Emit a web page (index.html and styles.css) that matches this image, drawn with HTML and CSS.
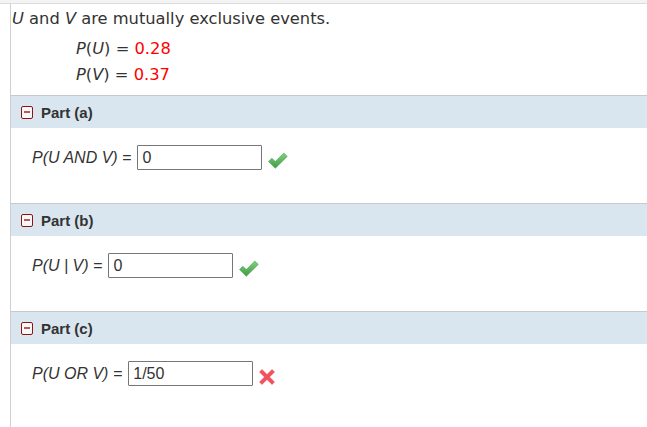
FILE: index.html
```html
<!DOCTYPE html>
<html>
<head>
<meta charset="utf-8">
<link rel="stylesheet" href="styles.css">
</head>
<body>
<div class="topbar"></div>
<div class="main">
  <div class="intro">
    <p class="lead"><i>U</i> and <i>V</i> are mutually exclusive events.</p>
    <div class="given">
      <div class="row"><i>P</i>(<i>U</i>) <span class="eq">=</span> <span class="val">0.28</span></div>
      <div class="row"><i>P</i>(<i>V</i>) <span class="eq">=</span> <span class="val">0.37</span></div>
    </div>
  </div>

  <div class="part">
    <div class="part-head"><span class="toggle"></span><span class="part-title">Part (a)</span></div>
    <div class="part-body">
      <span class="label">P(U AND V) =</span>
      <span class="answer">0</span>
      <svg class="mark" width="20" height="17" viewBox="0 0 20 17"><defs><linearGradient id="g1" x1="0" y1="0" x2="0" y2="1"><stop offset="0" stop-color="#82d27d"/><stop offset="1" stop-color="#3f9b45"/></linearGradient></defs><path d="M0.5 9.5 L3.8 6.2 L7.3 9.6 L15.8 1 L19.3 4.4 L7.3 16.2 Z" fill="url(#g1)" stroke="#4fa352" stroke-width="0.6" stroke-linejoin="round"/></svg>
    </div>
  </div>

  <div class="part">
    <div class="part-head"><span class="toggle"></span><span class="part-title">Part (b)</span></div>
    <div class="part-body">
      <span class="label">P(U | V) =</span>
      <span class="answer">0</span>
      <svg class="mark" width="20" height="17" viewBox="0 0 20 17"><defs><linearGradient id="g2" x1="0" y1="0" x2="0" y2="1"><stop offset="0" stop-color="#82d27d"/><stop offset="1" stop-color="#3f9b45"/></linearGradient></defs><path d="M0.5 9.5 L3.8 6.2 L7.3 9.6 L15.8 1 L19.3 4.4 L7.3 16.2 Z" fill="url(#g2)" stroke="#4fa352" stroke-width="0.6" stroke-linejoin="round"/></svg>
    </div>
  </div>

  <div class="part">
    <div class="part-head"><span class="toggle"></span><span class="part-title">Part (c)</span></div>
    <div class="part-body">
      <span class="label">P(U OR V) =</span>
      <span class="answer">1/50</span>
      <svg class="mark cross" width="16" height="16" viewBox="0 0 16 16"><path d="M3 0.5 L8 5.5 L13 0.5 L15.5 3 L10.5 8 L15.5 13 L13 15.5 L8 10.5 L3 15.5 L0.5 13 L5.5 8 L0.5 3 Z" fill="#f0525c" stroke="#e8444f" stroke-width="0.5" stroke-linejoin="round"/></svg>
    </div>
  </div>
</div>
</body>
</html>
```
FILE: styles.css
```css
html, body {
  margin: 0;
  padding: 0;
  background: #fff;
}
.topbar {
  height: 3px;
  background: #f3f3f3;
  border-bottom: 1px solid #dcdcdc;
}
.main {
  margin-left: 10px;
  border-left: 1px solid #cfcfcf;
  min-height: 423px;
}
.intro {
  padding: 5px 0 7px 1px;
  font-family: "DejaVu Sans", Verdana, sans-serif;
  color: #333;
}
.lead {
  margin: 0;
  font-size: 16.3px;
  line-height: 20px;
}
.given {
  margin: 7px 0 0 64px;
  font-size: 16.3px;
}
.given .row {
  line-height: 26px;
}
.val {
  color: #f00;
}
.part-head {
  height: 32px;
  border-top: 1px solid #c9c9c9;
  background: #d9e6f0;
  display: flex;
  align-items: center;
  padding-left: 10px;
  font-family: "Liberation Sans", Arial, sans-serif;
}
.toggle {
  width: 10px;
  height: 11px;
  border: 1px solid #8b1515;
  border-radius: 2px;
  background: #fbf7f7;
  position: relative;
  margin-right: 8px;
  margin-top: 1px;
}
.toggle::after {
  content: "";
  position: absolute;
  left: 2px;
  top: 4px;
  width: 6px;
  height: 2px;
  background: #b65a5a;
}
.part-title {
  font-weight: bold;
  font-size: 15px;
  color: #333;
}
.part-body {
  height: 75px;
  display: flex;
  align-items: flex-start;
  padding: 17px 0 0 21px;
  box-sizing: border-box;
  font-family: "Liberation Sans", Arial, sans-serif;
  font-size: 16px;
  color: #333;
}
.label {
  font-style: italic;
  line-height: 25px;
  margin-right: 6px;
}
.answer {
  width: 119px;
  height: 23px;
  border: 1px solid #767676;
  border-radius: 1px;
  padding-left: 4px;
  line-height: 23px;
  font-size: 16px;
  color: #333;
}
.mark {
  margin: 7px 0 0 6px;
}
.cross {
  margin: 8px 0 0 6px;
}
```
